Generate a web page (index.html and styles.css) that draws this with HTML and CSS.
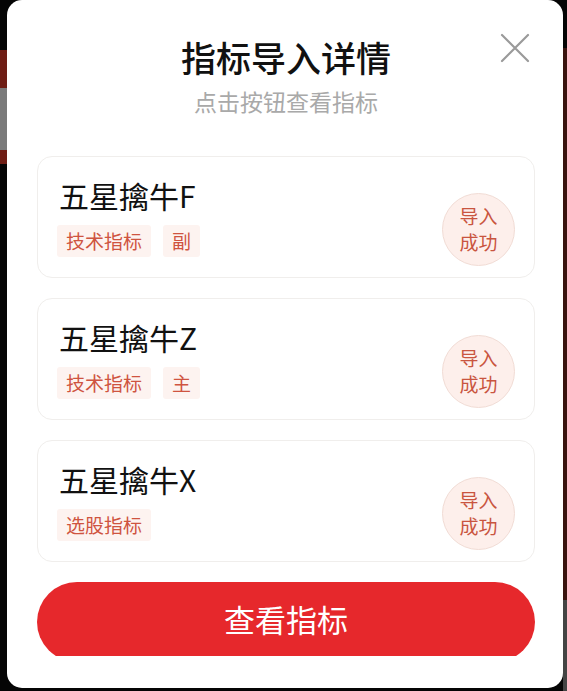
FILE: index.html
```html
<!DOCTYPE html>
<html lang="zh-CN">
<head>
    <meta charset="UTF-8">
    <meta name="viewport" content="width=device-width, initial-scale=1.0">
    <title>指标导入详情</title>
    <link rel="stylesheet" href="styles.css">
</head>
<body>

    <div class="modal">
        <!-- Close Button -->
        <button class="close-button" aria-label="关闭">
            <svg width="30" height="30" viewBox="0 0 30 30">
                <path d="M2 2 L28 28 M28 2 L2 28" stroke="#9a9a9a" stroke-width="2.2" stroke-linecap="round" fill="none"/>
            </svg>
        </button>

        <header>
            <h1>指标导入详情</h1>
            <p>点击按钮查看指标</p>
        </header>

        <div class="list">
            <div class="card">
                <div class="card-info">
                    <div class="card-title">五星擒牛F</div>
                    <div class="tags">
                        <span class="tag">技术指标</span>
                        <span class="tag">副</span>
                    </div>
                </div>
                <div class="badge"><span>导入</span><span>成功</span></div>
            </div>

            <div class="card">
                <div class="card-info">
                    <div class="card-title">五星擒牛Z</div>
                    <div class="tags">
                        <span class="tag">技术指标</span>
                        <span class="tag">主</span>
                    </div>
                </div>
                <div class="badge"><span>导入</span><span>成功</span></div>
            </div>

            <div class="card">
                <div class="card-info">
                    <div class="card-title">五星擒牛X</div>
                    <div class="tags">
                        <span class="tag">选股指标</span>
                    </div>
                </div>
                <div class="badge"><span>导入</span><span>成功</span></div>
            </div>
        </div>

        <div class="action">
            <button class="view-button">查看指标</button>
        </div>
    </div>

</body>
</html>
```

FILE: styles.css
```css
body {
    font-family: "Noto Sans CJK SC", "Noto Sans", sans-serif;
    margin: 0;
    padding: 0;
    height: 691px;
    overflow: hidden;
    background-color: #050505;
    /* bits of the page behind the dialog */
    background-image:
        linear-gradient(to bottom, transparent 50px, #6e1d14 50px, #6e1d14 88px, #7a7a7a 88px, #7a7a7a 150px, #6e1d14 150px, #6e1d14 164px, transparent 164px),
        linear-gradient(to bottom, transparent 48px, #3a140f 48px, #3a140f 600px, #444 600px);
    background-size: 7px 100%, 4px 100%;
    background-position: left top, right top;
    background-repeat: no-repeat;
}

.modal {
    position: relative;
    box-sizing: border-box;
    width: 556px;
    height: 688px;
    margin-left: 7px;
    padding: 36px 28px 31px 30px;
    background: #ffffff;
    border-radius: 15px;
    display: flex;
    flex-direction: column;
}

.close-button {
    position: absolute;
    top: 33px;
    right: 33px;
    width: 30px;
    height: 30px;
    padding: 0;
    border: none;
    background: none;
    cursor: pointer;
}

header {
    text-align: center;
    margin-bottom: 40px;
}

header h1 {
    margin: 0;
    font-size: 35px;
    line-height: 41px;
    font-weight: 500;
    color: #111111;
}

header p {
    margin: 9px 0 0;
    font-size: 23px;
    line-height: 30px;
    color: #a9a9a9;
}

.list {
    display: flex;
    flex-direction: column;
    gap: 20px;
}

.card {
    box-sizing: border-box;
    height: 122px;
    padding: 20px 19px 0 21px;
    border: 1px solid #f0eeec;
    border-radius: 15px;
    display: flex;
    justify-content: space-between;
    align-items: center;
}

.card-info {
    align-self: flex-start;
}

.card-title {
    font-size: 30px;
    line-height: 36px;
    color: #111111;
}

.tags {
    display: flex;
    gap: 12px;
    margin-top: 12px;
    margin-left: -2px;
}

.tag {
    height: 32px;
    line-height: 32px;
    padding: 0 9px;
    font-size: 19px;
    color: #cf5440;
    background-color: #fdf3f0;
    border-radius: 3px;
}

.badge {
    box-sizing: border-box;
    width: 73px;
    height: 73px;
    margin-top: 4px;
    border-radius: 50%;
    border: 1px solid #f1dcd5;
    background-color: #fdefeb;
    color: #c9553f;
    font-size: 19px;
    line-height: 26px;
    text-align: center;
    display: flex;
    flex-direction: column;
    align-items: center;
    justify-content: center;
}

/* button sits in a strip that cuts its bottom edge */
.action {
    margin-top: 20px;
    height: 74px;
    overflow: hidden;
}

.view-button {
    width: 100%;
    height: 80px;
    border: none;
    border-radius: 40px;
    background-color: #e6282c;
    color: #ffffff;
    font-family: inherit;
    font-size: 31px;
    padding: 0 0 8px;
    cursor: pointer;
}
```
